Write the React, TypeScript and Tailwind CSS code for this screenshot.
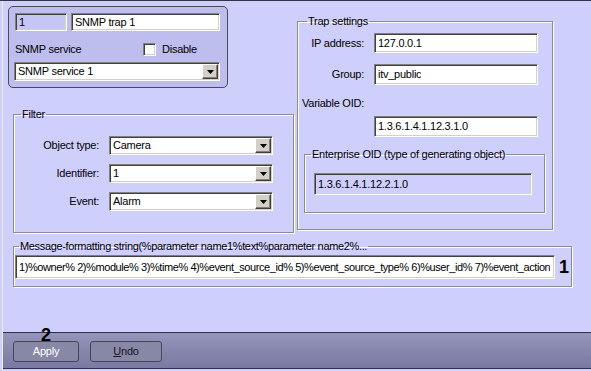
import type { ReactNode } from 'react';

const sunken =
  'border border-[#808080] border-b-white border-r-white shadow-[inset_1px_1px_0_#404040,inset_-1px_-1px_0_#d4d0c8]';
const etched = 'border border-[#8a8a9c] shadow-[inset_1px_1px_0_#ffffff,1px_1px_0_#ffffff]';

function Arrow() {
  return (
    <svg width="7" height="4" viewBox="0 0 7 4">
      <polygon points="0,0 7,0 3.5,4" fill="#000" />
    </svg>
  );
}

function Combo({ value, className = '' }: { value: string; className?: string }) {
  return (
    <div className={`flex bg-white p-[1px] ${sunken} ${className}`}>
      <span className="flex-1 flex items-center pl-[2px] truncate">{value}</span>
      <span className="w-[16px] flex items-center justify-center bg-[#d4d0c8] border border-t-white border-l-white border-b-[#404040] border-r-[#404040] shadow-[inset_-1px_-1px_0_#808080]">
        <Arrow />
      </span>
    </div>
  );
}

function Field({ value, className = '' }: { value: string; className?: string }) {
  return (
    <div className={`flex items-center pl-[3px] overflow-hidden whitespace-nowrap ${sunken} ${className}`}>
      <span className="min-w-0 overflow-hidden">{value}</span>
    </div>
  );
}

function Group({ title, className = '', legendClass = 'ml-[5px]', children }: { title: string; className?: string; legendClass?: string; children: ReactNode }) {
  return (
    <fieldset className={`${etched} ${className}`}>
      <legend className={`px-[1px] leading-[13px] ${legendClass}`}>{title}</legend>
      {children}
    </fieldset>
  );
}

export default function App() {
  return (
    <div className="relative w-[591px] h-[371px] overflow-hidden bg-[#cfcffb] border-t border-[#33334d] pl-[2px] font-['Liberation_Sans',Arial,sans-serif] text-[11px] tracking-[-0.25px] text-black">
      <div className="h-full border-l border-[#ececf4] flex flex-col">
        <div className="flex items-start">
          {/* left column */}
          <div className="ml-[5px] flex flex-col">
            <div className="mt-[5px] w-[220px] h-[82px] rounded-[5px] border border-[#4a4a5a] bg-[#bdbdee] px-[6px] pt-[6px]">
              <div className="flex gap-[4px]">
                <Field value="1" className="w-[52px] h-[18px] bg-[#c6c6f4]" />
                <Field value="SNMP trap 1" className="w-[149px] h-[18px] bg-white" />
              </div>
              <div className="mt-[12px] flex items-center h-[13px]">
                <span className="w-[128px]">SNMP service</span>
                <span className={`w-[13px] h-[13px] bg-white ${sunken}`} />
                <span className="ml-[6px]">Disable</span>
              </div>
              <Combo value="SNMP service 1" className="mt-[6px] -ml-[1px] w-[206px] h-[19px]" />
            </div>

            <Group title="Filter" legendClass="ml-[7px]" className="mt-[20px] ml-[5px] w-[281px] h-[125px]">
              <div className="mt-[15px] flex flex-col gap-[9px]">
                {[
                  ['Object type:', 'Camera'],
                  ['Identifier:', '1'],
                  ['Event:', 'Alarm'],
                ].map(([label, value]) => (
                  <div key={label} className="flex items-center">
                    <span className="w-[85px] text-right">{label}</span>
                    <Combo value={value} className="ml-[10px] w-[164px] h-[19px]" />
                  </div>
                ))}
              </div>
            </Group>
          </div>

          {/* trap settings */}
          <Group title="Trap settings" legendClass="ml-[9px]" className="mt-[14px] ml-[3px] w-[256px] h-[215px]">
            <div className="mt-[5px] flex items-center">
              <span className="w-[66px] text-right">IP address:</span>
              <Field value="127.0.0.1" className="ml-[10px] w-[164px] h-[20px] bg-white" />
            </div>
            <div className="mt-[11px] flex items-center">
              <span className="w-[66px] text-right">Group:</span>
              <Field value="itv_public" className="ml-[10px] w-[164px] h-[21px] bg-white" />
            </div>
            <div className="mt-[12px] ml-[4px] leading-[13px]">Variable OID:</div>
            <Field value="1.3.6.1.4.1.12.3.1.0" className="mt-[6px] ml-[76px] w-[164px] h-[21px] bg-white" />
            <Group
              title="Enterprise OID (type of generating object)"
              legendClass="ml-[6px]"
              className="mt-[11px] ml-[6px] w-[241px] h-[65px]"
            >
              <Field value="1.3.6.1.4.1.12.2.1.0" className="mt-[12px] ml-[9px] w-[218px] h-[22px]" />
            </Group>
          </Group>
        </div>

        <Group
          title="Message-formatting string(%parameter name1%text%parameter name2%..."
          legendClass="ml-[5px] tracking-[-0.35px]"
          className="mt-[7px] ml-[10px] w-[559px] h-[47px]"
        >
          <div className="mt-[2px] flex items-center">
            <Field
              value="1)%owner% 2)%module% 3)%time% 4)%event_source_id% 5)%event_source_type% 6)%user_id% 7)%event_action"
              className="ml-[1px] w-[540px] h-[24px] bg-white tracking-[-0.42px]"
            />
            <span className="ml-[4px] text-[18px] font-bold tracking-normal leading-none">1</span>
          </div>
        </Group>

        <div className="flex-1" />

        <div className="border-t border-b border-[#30304a] h-[37px] bg-linear-to-b from-[#9595bb] to-[#7979a1] pl-[10px] pt-[8px] flex gap-[11px]">
          <button className="w-[66px] h-[21px] rounded-[3px] border border-[#45455c] bg-[#8787a6] text-white">
            Apply
          </button>
          <button className="w-[72px] h-[21px] rounded-[3px] border border-[#45455c] bg-[#8787a6] text-[#141420]">
            <span className="underline">U</span>ndo
          </button>
        </div>
        <div className="h-[2px]" />
      </div>

      <span className="absolute left-[41px] top-[325px] text-[18px] font-bold tracking-normal leading-none">2</span>
    </div>
  );
}
